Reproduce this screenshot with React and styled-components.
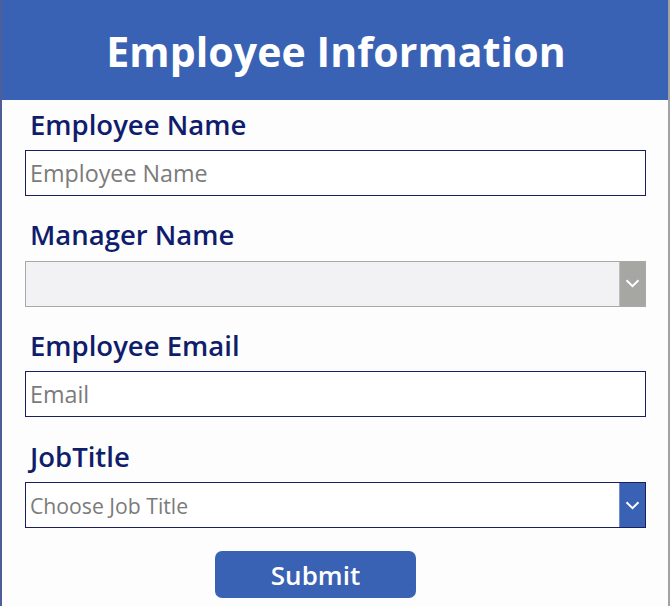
import React from "react";
import styled, { createGlobalStyle } from "styled-components";

const Global = createGlobalStyle`
  html, body { margin: 0; padding: 0; background: #ffffff; }
  body { font-family: "Open Sans", "Noto Sans", sans-serif; }
`;

const Screen = styled.div`
  box-sizing: border-box;
  width: 670px;
  height: 606px;
  border-left: 2px solid #4f5d98;
  border-right: 2px solid #a3a3a3;
  background: #fdfdfd;
  display: flex;
  flex-direction: column;
  overflow: hidden;
`;

const Header = styled.header`
  height: 100px;
  background: #3a62b4;
  display: flex;
  align-items: center;
  justify-content: center;
  flex-shrink: 0;
`;

const Title = styled.h1`
  margin: 0;
  color: #ffffff;
  font-size: 41px;
  font-weight: 700;
  letter-spacing: 0.1px;
  padding-top: 1px;
  padding-left: 2px;
`;

const Form = styled.form`
  display: flex;
  flex-direction: column;
  padding-left: 23px;
  gap: 14.7px;
`;

const Group = styled.div`
  display: flex;
  flex-direction: column;
`;

const Label = styled.label`
  height: 50px;
  display: flex;
  align-items: center;
  padding-left: 5px;
  padding-bottom: 2px;
  box-sizing: border-box;
  color: #0f1d6c;
  font-size: 27.5px;
  font-weight: 600;
`;

const TextBox = styled.div`
  box-sizing: border-box;
  width: 621px;
  height: 46px;
  border: 1px solid #1b1f5f;
  background: #ffffff;
  display: flex;
  align-items: center;
  padding-left: 4px;
  color: #7b7b7b;
  font-size: 23.3px;
`;

const Select = styled.div`
  box-sizing: border-box;
  width: 621px;
  height: 46px;
  border: 1px solid ${(p) => (p.$disabled ? "#a9a9a9" : "#1b1f5f")};
  background: ${(p) => (p.$disabled ? "#f2f2f5" : "#ffffff")};
  display: flex;
  align-items: stretch;
`;

const SelectText = styled.div`
  flex: 1;
  display: flex;
  align-items: center;
  padding-left: 4px;
  color: #7b7b7b;
  font-size: 21.2px;
`;

const Chevron = styled.div`
  width: 25px;
  background: ${(p) => (p.$disabled ? "#a6a6a3" : "#3a62b4")};
  border-left: 1px solid ${(p) => (p.$disabled ? "#bdbdbd" : "#6f8ccb")};
  display: flex;
  align-items: center;
  justify-content: center;
`;

const SubmitButton = styled.button`
  margin-top: 8px;
  margin-left: 190px;
  width: 201px;
  height: 47px;
  border: none;
  border-radius: 7px;
  background: #3a62b4;
  color: #ffffff;
  font-family: "Open Sans", "Noto Sans", sans-serif;
  font-size: 26px;
  font-weight: 600;
  padding: 2px 0 0;
`;

const Arrow = () => (
  <svg width="15" height="9" viewBox="0 0 15 9" fill="none">
    <path d="M1.5 1.2 L7.5 7.2 L13.5 1.2" stroke="#ffffff" strokeWidth="2" />
  </svg>
);

export default function App() {
  return (
    <>
      <Global />
      <Screen>
        <Header>
          <Title>Employee Information</Title>
        </Header>
        <Form>
          <Group>
            <Label>Employee Name</Label>
            <TextBox>Employee Name</TextBox>
          </Group>
          <Group>
            <Label>Manager Name</Label>
            <Select $disabled>
              <SelectText />
              <Chevron $disabled>
                <Arrow />
              </Chevron>
            </Select>
          </Group>
          <Group>
            <Label>Employee Email</Label>
            <TextBox>Email</TextBox>
          </Group>
          <Group>
            <Label>JobTitle</Label>
            <Select>
              <SelectText>Choose Job Title</SelectText>
              <Chevron>
                <Arrow />
              </Chevron>
            </Select>
          </Group>
          <SubmitButton type="button">Submit</SubmitButton>
        </Form>
      </Screen>
    </>
  );
}
